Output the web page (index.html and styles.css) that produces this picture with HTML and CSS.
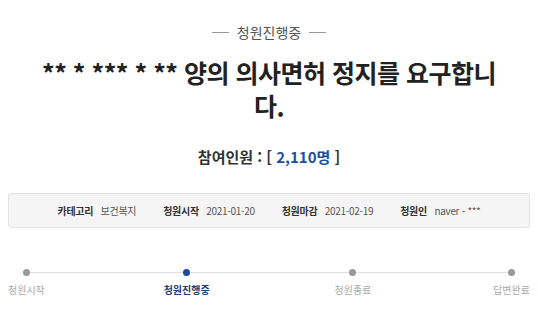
FILE: index.html
```html
<!DOCTYPE html>
<html lang="ko">
<head>
    <meta charset="UTF-8">
    <meta name="viewport" content="width=device-width, initial-scale=1.0">
    <title>청원진행중</title>
    <link rel="stylesheet" href="styles.css">
</head>
<body>
    <div class="petition">
        <div class="status"><span>청원진행중</span></div>

        <h1 class="title">** * *** * ** 양의 의사면허 정지를 요구합니다.</h1>

        <p class="count">참여인원 : [ <span class="num">2,110명</span> ]</p>

        <ul class="info">
            <li><b>카테고리</b> 보건복지</li>
            <li><b>청원시작</b> 2021-01-20</li>
            <li><b>청원마감</b> 2021-02-19</li>
            <li><b>청원인</b> naver - ***</li>
        </ul>

        <ol class="steps">
            <li>청원시작</li>
            <li class="on">청원진행중</li>
            <li>청원종료</li>
            <li>답변완료</li>
        </ol>
    </div>
</body>
</html>
```

FILE: styles.css
```css
body {
    margin: 0;
    background: #fff;
    font-family: "Noto Sans CJK KR", "Noto Sans", sans-serif;
    color: #333;
}
.petition {
    padding: 22px 10px 0 8px;
}
.status {
    display: flex;
    align-items: center;
    justify-content: center;
    gap: 8px;
    font-size: 14px;
    color: #555;
    height: 20px;
}
.status::before,
.status::after {
    content: "";
    width: 17px;
    height: 1px;
    background: #999;
}
.title {
    margin: 14px 28px 0 28px;
    font-size: 25px;
    line-height: 33px;
    letter-spacing: -0.5px;
    font-weight: 700;
    text-align: center;
    color: #222;
}
.count {
    margin: 24px 0 0;
    text-align: center;
    font-size: 15px;
    font-weight: 700;
    color: #333;
}
.count .num {
    color: #1d4f9c;
}
.info {
    list-style: none;
    margin: 26px 0 0;
    padding: 0;
    height: 33px;
    display: flex;
    align-items: center;
    justify-content: center;
    gap: 27px;
    background: #f5f5f5;
    border: 1px solid #e3e3e3;
    border-radius: 3px;
    font-size: 10px;
    letter-spacing: -0.3px;
    color: #555;
}
.info b {
    color: #333;
    margin-right: 5px;
}
.steps {
    list-style: none;
    margin: 41px 0 0;
    padding: 0;
    display: flex;
    justify-content: space-between;
    position: relative;
    font-size: 10px;
    color: #aaa;
}
.steps::before {
    content: "";
    position: absolute;
    left: 17px;
    right: 17px;
    top: 3px;
    height: 1px;
    background: #e0e0e0;
}
.steps li {
    position: relative;
    display: flex;
    flex-direction: column;
    align-items: center;
    gap: 6px;
}
.steps li::before {
    content: "";
    width: 7px;
    height: 7px;
    border-radius: 50%;
    background: #999;
}
.steps li.on {
    margin: 0 3px 0 -3px;
    color: #1f3f7c;
    font-weight: 700;
}
.steps li.on::before {
    background: #1a4a9a;
}
```
